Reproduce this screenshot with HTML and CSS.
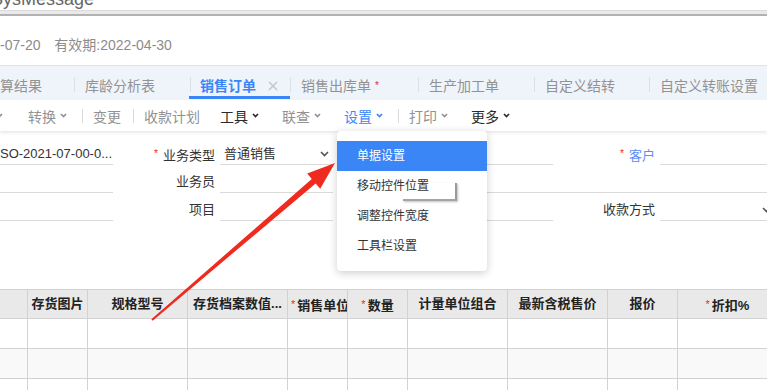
FILE: index.html
```html
<!DOCTYPE html>
<html lang="zh-CN">

<head>
    <meta charset="UTF-8">
    <meta name="viewport" content="width=device-width, initial-scale=1.0">
    <title>销售订单</title>
    <link rel="stylesheet" href="styles.css">
</head>

<body>
    <div class="page">
        <div class="sys-bar"><span class="sys-bar__title">SysMessage</span></div>
        <div class="sys-line"></div>

        <div class="bill-info">
            <span>-07-20</span>
            <span class="bill-info__valid">有效期:2022-04-30</span>
        </div>

        <ul class="tabs">
            <li class="tab tab--first">算结果</li>
            <li class="tab-sep"></li>
            <li class="tab tab--w115">库龄分析表</li>
            <li class="tab-sep"></li>
            <li class="tab tab--active">销售订单
                <svg class="tab__close" viewBox="0 0 10 10" width="10" height="10">
                    <path d="M1 1l8 8M9 1l-8 8" stroke="currentColor" stroke-width="1.4" fill="none" />
                </svg>
            </li>
            <li class="tab-sep"></li>
            <li class="tab tab--w127">销售出库单 <span class="star">*</span></li>
            <li class="tab-sep"></li>
            <li class="tab tab--w115">生产加工单</li>
            <li class="tab-sep"></li>
            <li class="tab tab--w114">自定义结转</li>
            <li class="tab-sep"></li>
            <li class="tab tab--last">自定义转账设置</li>
        </ul>

        <div class="toolbar">
            <svg class="chev chev--lead" viewBox="0 0 7 5" width="7" height="5"><path d="M1 1l2.5 2.5L6 1" /></svg>
            <span class="tool tool--first">转换<svg class="chev" viewBox="0 0 7 5" width="7" height="5"><path d="M1 1l2.5 2.5L6 1" /></svg></span>
            <span class="tool-sep tool-sep--wide"></span>
            <span class="tool tool--after-sep">变更</span>
            <span class="tool-sep"></span>
            <span class="tool tool--after-sep">收款计划</span>
            <span class="tool tool--dark tool--tools">工具<svg class="chev" viewBox="0 0 7 5" width="7" height="5"><path d="M1 1l2.5 2.5L6 1" /></svg></span>
            <span class="tool">联查<svg class="chev" viewBox="0 0 7 5" width="7" height="5"><path d="M1 1l2.5 2.5L6 1" /></svg></span>
            <span class="tool tool--active">设置<svg class="chev" viewBox="0 0 7 5" width="7" height="5"><path d="M1 1l2.5 2.5L6 1" /></svg></span>
            <span class="tool-sep tool-sep--wide"></span>
            <span class="tool tool--after-sep">打印<svg class="chev" viewBox="0 0 7 5" width="7" height="5"><path d="M1 1l2.5 2.5L6 1" /></svg></span>
            <span class="tool tool--dark">更多<svg class="chev" viewBox="0 0 7 5" width="7" height="5"><path d="M1 1l2.5 2.5L6 1" /></svg></span>
        </div>

        <div class="form">
            <div class="field">SO-2021-07-00-0...</div>
            <div class="label"><span class="star">*</span>业务类型</div>
            <div class="field">普通销售<svg class="select-chev" viewBox="0 0 9 6" width="9" height="6"><path d="M1 1l3.5 3.5L8 1" /></svg></div>
            <div class="label"></div>
            <div class="field"></div>
            <div class="label label--link"><span class="star">*</span>客户</div>
            <div class="field"></div>

            <div class="field"></div>
            <div class="label">业务员</div>
            <div class="field"></div>
            <div class="label"></div>
            <div class="field field--span3"></div>

            <div class="field"></div>
            <div class="label">项目</div>
            <div class="field"></div>
            <div class="label"></div>
            <div class="field"></div>
            <div class="label">收款方式</div>
            <div class="field"><svg class="select-chev" viewBox="0 0 9 6" width="9" height="6"><path d="M1 1l3.5 3.5L8 1" /></svg></div>
        </div>

        <div class="sheet">
            <div class="sheet__head"></div>
            <div class="sheet__head">存货图片</div>
            <div class="sheet__head">规格型号</div>
            <div class="sheet__head">存货档案数值...</div>
            <div class="sheet__head"><span class="star">*</span>销售单位</div>
            <div class="sheet__head"><span class="star">*</span>数量</div>
            <div class="sheet__head">计量单位组合</div>
            <div class="sheet__head">最新含税售价</div>
            <div class="sheet__head">报价</div>
            <div class="sheet__head"><span class="star">*</span>折扣%</div>
        </div>
        <div class="sheet" id="sheet-body"></div>

        <ul class="dropdown">
            <li class="dropdown__item dropdown__item--active">单据设置</li>
            <li class="dropdown__item">移动控件位置</li>
            <li class="dropdown__item">调整控件宽度</li>
            <li class="dropdown__item">工具栏设置</li>
            <li class="dropdown__ghost"></li>
        </ul>

        <svg class="arrow" viewBox="0 0 767 390" width="767" height="390">
            <polygon points="151.35,319.24 311.75,178.92 307.2,173.6 335,163 320.2,188.8 315.65,183.48 152.65,320.76" />
        </svg>
    </div>

    <script>
        const body = document.getElementById('sheet-body');
        for (let r = 0; r < 3; r++) {
            for (let c = 0; c < 10; c++) {
                const cell = document.createElement('div');
                cell.className = 'sheet__cell' + (r === 1 ? ' sheet__cell--alt' : '');
                body.appendChild(cell);
            }
        }
    </script>
</body>

</html>
```

FILE: styles.css
```css
:root {
    --primary-color: #3b86f6;
    --text-color: #333333;
    --muted-color: #929292;
    --line-color: #dadada;
    --grid-line: #d2d2d2;
    --star-color: #f5222d;
    --tab-bg: #eff4fb;
}

* {
    box-sizing: border-box;
}

body {
    margin: 0;
    font-family: 'Liberation Sans', 'Noto Sans CJK SC', sans-serif;
    color: var(--text-color);
    background: #fff;
}

ul {
    list-style: none;
    margin: 0;
    padding: 0;
}

.page {
    position: relative;
    width: 767px;
    height: 390px;
    overflow: hidden;
}

.star {
    color: var(--star-color);
    font-size: 10px;
    font-weight: 400;
    vertical-align: 3px;
}

/* top strip */
.sys-bar {
    height: 10px;
    overflow: hidden;
}

.sys-bar__title {
    display: block;
    margin-top: -11px;
    text-indent: -9px;
    font-size: 18px;
    line-height: 20px;
    color: #666;
}

.sys-line {
    height: 6px;
    background: #e9e9e9;
    border-top: 1px solid #dcdcdc;
    border-bottom: 2px solid #b2b2b2;
}

.bill-info {
    height: 49px;
    padding-top: 19px;
    font-size: 14px;
    line-height: 20px;
    color: #8c8c8c;
}

.bill-info__valid {
    margin-left: 10px;
}

/* tabs */
.tabs {
    display: flex;
    height: 35px;
    background: var(--tab-bg);
    border-top: 1px solid #dfe3e8;
    white-space: nowrap;
}

.tab {
    display: flex;
    align-items: flex-start;
    flex-shrink: 0;
    height: 33px;
    padding: 10px 0 0 10px;
    line-height: 20px;
    font-size: 14px;
    color: var(--muted-color);
    border-bottom: 3px solid transparent;
}

.tab--first {
    width: 74px;
    padding-left: 0;
}

.tab--w115 {
    width: 115px;
}

.tab--w127 {
    width: 127px;
}

.tab--w114 {
    width: 114px;
}

.tab--last {
    width: 120px;
}

.tab--active {
    width: 101px;
    margin-left: -2px;
    padding-left: 11px;
    color: var(--primary-color);
    font-weight: 700;
    border-bottom-color: var(--primary-color);
}

.tab .star {
    margin-left: 4px;
    vertical-align: 0;
}

.tab__close {
    margin: 5px 0 0 12px;
    color: #c4c4c4;
}

.tab-sep {
    flex-shrink: 0;
    width: 1px;
    height: 15px;
    margin-top: 11px;
    background: #dcdfe4;
}

/* toolbar */
.toolbar {
    position: relative;
    z-index: 1;
    display: flex;
    align-items: center;
    height: 31px;
    font-size: 14px;
    white-space: nowrap;
    background: #fff;
    box-shadow: 0 2px 3px rgba(0, 0, 0, 0.09);
}

.tool {
    display: flex;
    align-items: center;
    margin-left: 23px;
    color: var(--muted-color);
}

.tool--first {
    margin-left: 25px;
}

.tool--after-sep {
    margin-left: 10px;
}

.tool--dark {
    color: #2b2b2b;
}

.tool--tools {
    margin-left: 20px;
}

.tool--active {
    color: var(--primary-color);
}

.tool-sep {
    width: 1px;
    height: 14px;
    margin-left: 12px;
    background: #d9d9d9;
}

.tool-sep--wide {
    margin-left: 15px;
}

.chev {
    margin-left: 4px;
    fill: none;
    stroke: currentColor;
    stroke-width: 1.7;
}

.chev--lead {
    margin-left: -4px;
    color: var(--muted-color);
}

/* form */
.form {
    display: grid;
    grid-template-columns: 113px 107px 113px 107px 113px 107px 115px;
    grid-auto-rows: 28px;
    height: 158px;
    padding-top: 6px;
    font-size: 13px;
}

.field {
    display: flex;
    align-items: center;
    align-self: end;
    height: 21px;
    padding: 0 4px 0 4px;
    line-height: 20px;
    border-bottom: 1px solid var(--line-color);
    white-space: nowrap;
}

.form > .field:first-child {
    padding-left: 0;
}

.field--span3 {
    grid-column: span 3;
}

.label {
    align-self: end;
    height: 21px;
    padding-right: 5px;
    line-height: 20px;
    text-align: right;
    white-space: nowrap;
}

.label .star {
    margin-right: 5px;
}

.label--link {
    color: #5b8ff5;
}

.select-chev {
    margin-left: auto;
    fill: none;
    stroke: #555;
    stroke-width: 1.6;
}

/* grid */
.sheet {
    display: grid;
    grid-template-columns: 28px 60px 100px 100px 60px 60px 100px 100px 70px 100px;
}

.sheet:not(#sheet-body) {
    border-top: 1px solid var(--grid-line);
}

.sheet__head,
.sheet__cell {
    border-right: 1px solid var(--grid-line);
    border-bottom: 1px solid var(--grid-line);
}

.sheet__head {
    height: 29px;
    padding: 0 3px;
    line-height: 28px;
    font-size: 13px;
    font-weight: 700;
    color: #222;
    text-align: center;
    white-space: nowrap;
    overflow: hidden;
    background: #e9e9e9;
}

.sheet__head .star {
    margin-right: 2px;
    font-size: 11px;
    vertical-align: 2px;
}

.sheet__cell {
    height: 30px;
}

.sheet__cell--alt {
    background: #f9f9f9;
}

/* settings menu */
.dropdown {
    position: absolute;
    left: 337px;
    top: 131px;
    z-index: 2;
    width: 150px;
    padding: 10px 0;
    background: #fff;
    border-radius: 4px;
    box-shadow: 0 2px 8px rgba(0, 0, 0, 0.2);
}

.dropdown__item {
    height: 30px;
    padding-left: 20px;
    line-height: 30px;
    font-size: 12px;
    color: #333;
}

.dropdown__item--active {
    color: #fff;
    background: var(--primary-color);
}

.dropdown__ghost {
    position: absolute;
    left: 66px;
    top: 52px;
    width: 54px;
    height: 18px;
    border-right: 2px solid #9a9a9a;
    border-bottom: 2px solid #a4a4a4;
    box-shadow: 1px 1px 2px rgba(0, 0, 0, 0.25);
}

.arrow {
    position: absolute;
    left: 0;
    top: 0;
    z-index: 3;
    pointer-events: none;
    fill: #ef2b1f;
}
```
